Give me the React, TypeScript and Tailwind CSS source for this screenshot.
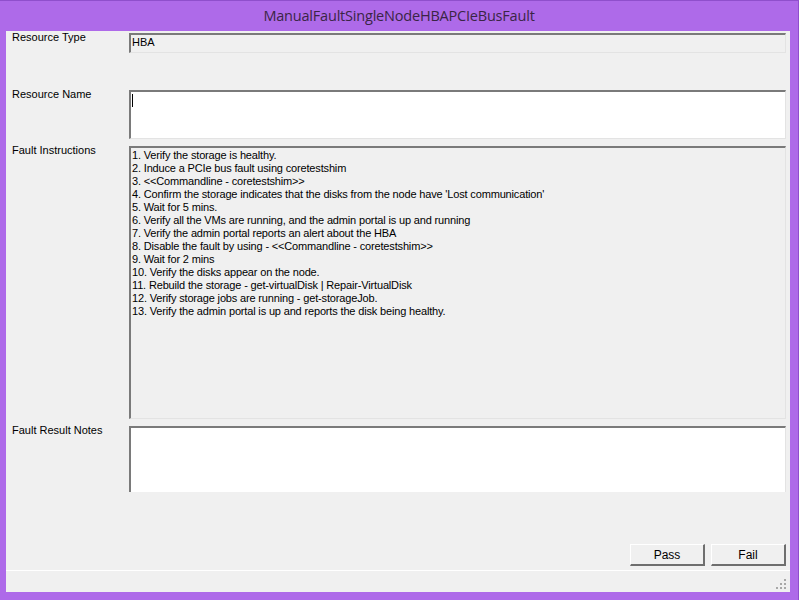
const STEPS = [
  '1. Verify the storage is healthy.',
  '2. Induce a PCIe bus fault using coretestshim',
  '3. <<Commandline - coretestshim>>',
  "4. Confirm the storage indicates that the disks from the node have 'Lost communication'",
  '5. Wait for 5 mins.',
  '6. Verify all the VMs are running, and the admin portal is up and running',
  '7. Verify the admin portal reports an alert about the HBA',
  '8. Disable the fault by using - <<Commandline - coretestshim>>',
  '9. Wait for 2 mins',
  '10. Verify the disks appear on the node.',
  '11. Rebuild the storage - get-virtualDisk | Repair-VirtualDisk',
  '12. Verify storage jobs are running - get-storageJob.',
  '13. Verify the admin portal is up and reports the disk being healthy.',
]

const sunken = 'border-t-2 border-l-2 border-r border-b border-t-[#7a7a7a] border-l-[#7a7a7a] border-r-[#e3e3e3] border-b-[#e3e3e3]'

function Grip() {
  const dots = [
    [8, 0],
    [4, 4], [8, 4],
    [0, 8], [4, 8], [8, 8],
  ]
  return (
    <svg width="11" height="11" viewBox="0 0 11 11" className="block">
      {dots.map(([x, y], i) => (
        <rect key={i} x={x} y={y} width="2" height="2" fill="#a8a8a8" />
      ))}
    </svg>
  )
}

export default function App() {
  return (
    <div className="w-[799px] h-[600px] bg-[#ae6ae9] border-t border-r border-[#8f4fcc] flex flex-col font-['Liberation_Sans',Arial,sans-serif] text-[11px] text-black overflow-hidden">
      <div className="h-[30px] flex items-center justify-center font-['Open_Sans',sans-serif] text-[14.5px] text-[#3a2545] tracking-[-0.2px]">
        ManualFaultSingleNodeHBAPCIeBusFault
      </div>
      <div className="ml-[6px] mr-[8px] mb-[8px] flex-1 bg-[#f0f0f0] flex flex-col">
        <div className="flex-1 flex flex-col pt-[2px] pr-[4px]">
          <div className="flex h-[20px]">
            <div className="w-[123px] pl-[6px] -mt-[2px] leading-[13px]">Resource Type</div>
            <div className={`flex-1 ${sunken} bg-[#f0f0f0] pl-[1px] leading-[15px]`}>HBA</div>
          </div>
          <div className="flex h-[49px] mt-[37px]">
            <div className="w-[123px] pl-[6px] -mt-[2px] leading-[13px]">Resource Name</div>
            <div className={`flex-1 ${sunken} bg-white pl-[1px] pt-[2px]`}>
              <div className="w-px h-[13px] bg-black" />
            </div>
          </div>
          <div className="flex h-[273px] mt-[7px]">
            <div className="w-[123px] pl-[6px] -mt-[2px] leading-[13px]">Fault Instructions</div>
            <div className={`flex-1 ${sunken} bg-[#f0f0f0] pl-[1px] pt-[1px] leading-[13px] tracking-[-0.16px]`}>
              {STEPS.map((s) => (
                <div key={s} className="whitespace-pre">{s}</div>
              ))}
            </div>
          </div>
          <div className="flex h-[66px] mt-[7px]">
            <div className="w-[123px] pl-[6px] -mt-[2px] leading-[13px]">Fault Result Notes</div>
            <div className="flex-1 border-t-2 border-l-2 border-[#7a7a7a] border-r border-r-[#e3e3e3] bg-white" />
          </div>
          <div className="flex-1" />
          <div className="flex justify-end gap-[6px] mb-[4px]">
            {['Pass', 'Fail'].map((b) => (
              <button
                key={b}
                className="w-[75px] h-[22px] bg-[#f0f0f0] border-t border-l border-t-white border-l-white border-b-2 border-r-2 border-b-[#6e6e6e] border-r-[#6e6e6e] text-[12px] leading-none"
              >
                {b}
              </button>
            ))}
          </div>
        </div>
        <div className="h-[22px] border-t border-white flex items-end justify-end pr-[3px] pb-[2px]">
          <Grip />
        </div>
      </div>
    </div>
  )
}
